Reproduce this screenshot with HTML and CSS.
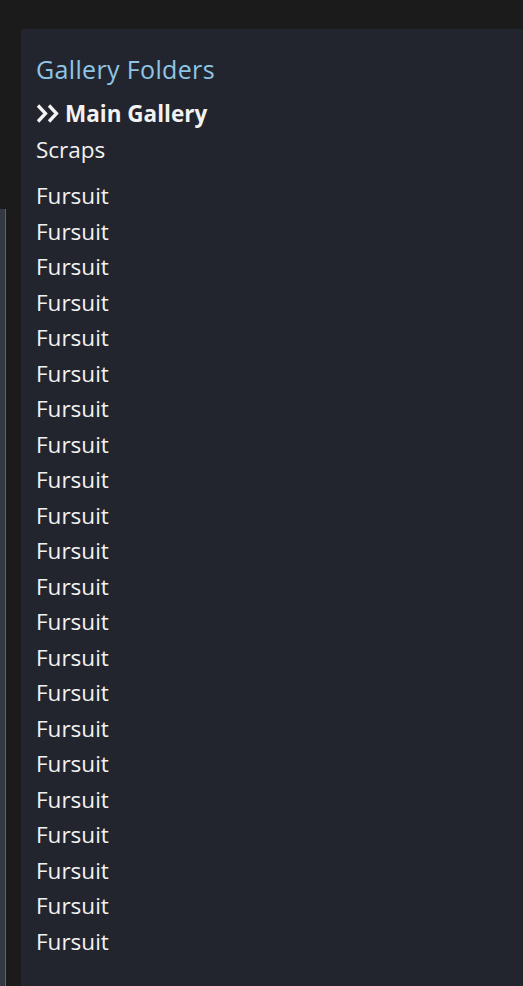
FILE: index.html
```html
<!DOCTYPE html>
<html>
<head>
<meta charset="utf-8">
<link rel="stylesheet" href="styles.css">
</head>
<body>
<div class="page">
  <div class="side"><div class="side-box"></div></div>
  <section class="panel">
    <h2 class="title">Gallery Folders</h2>
    <ul class="folders main">
      <li class="active"><svg class="chev" width="23" height="19" viewBox="0 0 23 19"><path d="M2 1.5 L9.5 9.5 L2 17.5 M13 1.5 L20.5 9.5 L13 17.5" fill="none" stroke="#f4f4f4" stroke-width="3.3" stroke-linejoin="miter"/></svg><span>Main Gallery</span></li>
      <li>Scraps</li>
    </ul>
    <ul class="folders">
      <li>Fursuit</li><li>Fursuit</li><li>Fursuit</li><li>Fursuit</li>
      <li>Fursuit</li><li>Fursuit</li><li>Fursuit</li><li>Fursuit</li>
      <li>Fursuit</li><li>Fursuit</li><li>Fursuit</li><li>Fursuit</li>
      <li>Fursuit</li><li>Fursuit</li><li>Fursuit</li><li>Fursuit</li>
      <li>Fursuit</li><li>Fursuit</li><li>Fursuit</li><li>Fursuit</li>
      <li>Fursuit</li><li>Fursuit</li>
    </ul>
  </section>
</div>
</body>
</html>
```
FILE: styles.css
```css
html, body {
  margin: 0;
  padding: 0;
  background: #1b1b1c;
  height: 100%;
  overflow: hidden;
}
body {
  font-family: "Open Sans", "Noto Sans", sans-serif;
  color: #f2f2f2;
}
.page {
  display: flex;
  padding-top: 29px;
  height: 986px;
  box-sizing: border-box;
  overflow: hidden;
}
.side {
  width: 21px;
  flex: none;
  padding-top: 180px;
  display: flex;
  flex-direction: column;
}
.side-box {
  flex: 1;
  width: 5px;
  background: #333943;
  border-right: 1px solid #5b6270;
}
.panel {
  flex: 1;
  background: #22252d;
  padding: 22px 15px 0 15px;
}
.title {
  margin: 0 0 9px 0;
  font-weight: 400;
  font-size: 25px;
  line-height: 36px;
  color: #8ec5e6;
  letter-spacing: 0.35px;
}
.folders {
  list-style: none;
  margin: 0;
  padding: 0;
}
.folders li {
  font-size: 22.5px;
  line-height: 35.5px;
}
.folders.main {
  margin-bottom: 11px;
}
.active {
  font-weight: 700;
  display: flex;
  align-items: center;
  gap: 6px;
}
.chev {
  flex: none;
}
```
